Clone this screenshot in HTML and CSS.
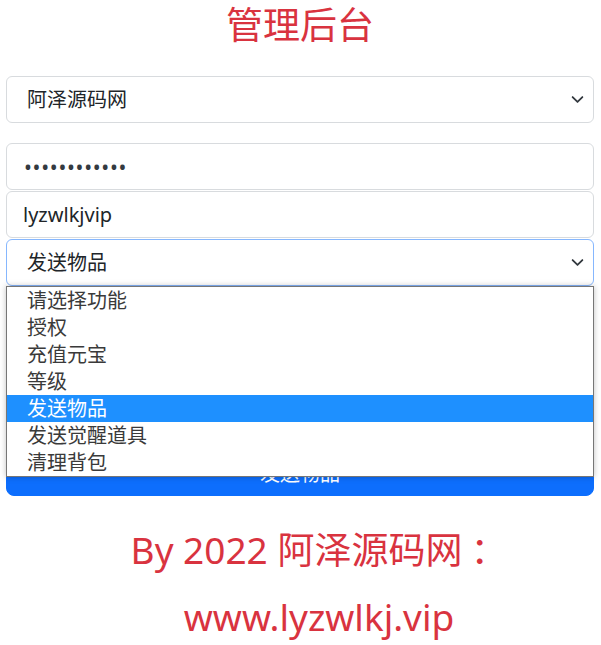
FILE: index.html
```html
<!DOCTYPE html>
<html lang="zh-CN">
<head>
<meta charset="utf-8">
<title>管理后台</title>
<link rel="stylesheet" href="styles.css">
</head>
<body>
<main class="page">
  <h1 class="title">管理后台</h1>
  <form class="form">
    <select class="control select server">
      <option>阿泽源码网</option>
    </select>
    <div class="stack">
      <input class="control password" type="password" value="123456789012">
      <input class="control" type="text" value="lyzwlkjvip">
      <div class="select-wrap">
        <select class="control select focus">
          <option>发送物品</option>
        </select>
        <ul class="dropdown">
          <li>请选择功能</li>
          <li>授权</li>
          <li>充值元宝</li>
          <li>等级</li>
          <li class="active">发送物品</li>
          <li>发送觉醒道具</li>
          <li>清理背包</li>
        </ul>
      </div>
      <input class="control" type="text" placeholder="物品ID">
      <input class="control" type="text" placeholder="数量">
      <input class="control" type="text" placeholder="备注">
    </div>
    <button class="btn" type="button">发送物品</button>
  </form>
  <p class="footer">By 2022 阿泽源码网<span class="colon">：</span><br>www.lyzwlkj.vip</p>
</main>
</body>
</html>
```

FILE: styles.css
```css
* { box-sizing: border-box; }
html, body { margin: 0; padding: 0; background: #fff; }
body {
  font-family: "Noto Sans", "Noto Sans CJK SC", sans-serif;
  color: #212529;
}
.page { padding: 0 7px 0 6px; }
.title {
  margin: 3px 0 0;
  text-align: center;
  font-size: 37px;
  line-height: 44px;
  font-weight: 400;
  color: #d9333f;
}
.form { margin-top: 29px; display: flex; flex-direction: column; }
.control {
  display: block;
  width: 100%;
  height: 47px;
  margin: 0;
  padding: 0 16px;
  font-family: "Noto Sans", "Noto Sans CJK SC", sans-serif;
  font-size: 20px;
  color: #212529;
  background: #fff;
  border: 1px solid #d8dbde;
  border-radius: 6px;
  outline: none;
}
.password { letter-spacing: 0.7px; font-size: 21px; color: #343a40; padding-left: 17px; }
.control::placeholder { color: #888; }
.select {
  -webkit-appearance: none;
  appearance: none;
  padding-left: 20px;
  background-image: url("data:image/svg+xml,%3csvg xmlns='http://www.w3.org/2000/svg' viewBox='0 0 16 16'%3e%3cpath fill='none' stroke='%23343a40' stroke-linecap='round' stroke-linejoin='round' stroke-width='2.2' d='m2 5 6 6 6-6'/%3e%3c/svg%3e");
  background-repeat: no-repeat;
  background-position: right 8px center;
  background-size: 15px 13px;
}
.server { margin-bottom: 20px; }
.stack { display: flex; flex-direction: column; gap: 0; }
.stack > .control + .control,
.stack > .select-wrap,
.stack > .select-wrap + .control { margin-top: 1px; }
.focus { border-color: #86b7fe; }
.select-wrap { position: relative; }
.dropdown {
  position: absolute;
  z-index: 5;
  top: 100%;
  left: 0;
  right: 0;
  margin: 0;
  padding: 0;
  list-style: none;
  background: #fff;
  border: 1px solid #767676;
  box-shadow: 0 0 6px rgba(0, 0, 0, 0.25);
}
.dropdown li {
  height: 27px;
  line-height: 27px;
  padding-left: 20px;
  font-size: 20px;
  color: #3a3a3a;
  white-space: nowrap;
}
.dropdown li.active { background: #1e90ff; color: #fff; }
.btn {
  margin-top: 19px;
  height: 47px;
  width: 100%;
  border: 1px solid #0d6efd;
  border-radius: 8px;
  background: #0d6efd;
  color: #fff;
  font-family: "Noto Sans", "Noto Sans CJK SC", sans-serif;
  font-size: 20px;
}
.footer {
  margin: 20px 0 0;
  padding-left: 38px;
  text-align: center;
  font-size: 37px;
  line-height: 67px;
  color: #d9333f;
}
.colon { padding-left: 8px; }
```
